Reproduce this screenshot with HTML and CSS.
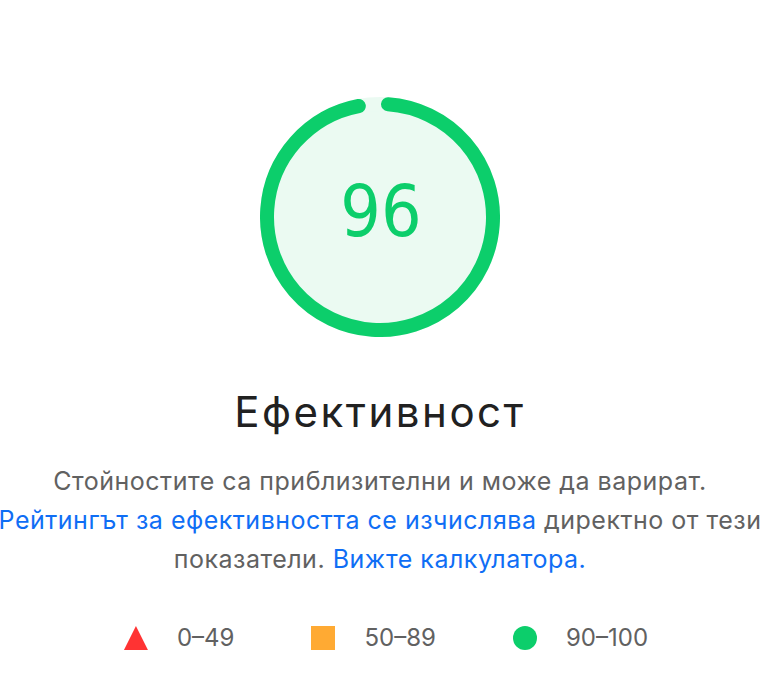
FILE: index.html
```html
<!DOCTYPE html>
<html lang="bg">
<head>
    <meta charset="UTF-8">
    <meta name="viewport" content="width=device-width, initial-scale=1.0">
    <title>Ефективност</title>
    <link rel="stylesheet" href="styles.css">
</head>
<body>

    <div class="report">
        <svg class="gauge" viewBox="0 0 240 240" width="240" height="240">
            <circle class="gauge-base" cx="120" cy="120" r="113"></circle>
            <circle class="gauge-arc" cx="120" cy="120" r="113" transform="rotate(-85.94 120 120)"></circle>
            <text class="gauge-value" x="121" y="139">96</text>
        </svg>

        <h2 class="gauge-title">Ефективност</h2>

        <p class="gauge-desc">
            Стойностите са приблизителни и може да варират.<br>
            <a href="#">Рейтингът за ефективността се изчислява</a> директно от тези<br>
            показатели. <a href="#">Вижте калкулатора.</a>
        </p>

        <div class="scale">
            <span class="scale-item"><span class="mark mark-fail"></span>0–49</span>
            <span class="scale-item"><span class="mark mark-average"></span>50–89</span>
            <span class="scale-item"><span class="mark mark-pass"></span>90–100</span>
        </div>
    </div>

</body>
</html>
```

FILE: styles.css
```css
html, body { margin: 0; background: #fff; overflow: hidden; }
body { font-family: Inter, "Noto Sans", sans-serif; color: #616161; }

.report { width: 760px; padding-top: 97px; display: flex; flex-direction: column; align-items: center; }

.gauge { display: block; }
.gauge-base { fill: #0cce6b; stroke: #0cce6b; stroke-width: 14; opacity: 0.08; }
.gauge-arc { fill: none; stroke: #0cce6b; stroke-width: 14; stroke-linecap: round; stroke-dasharray: 680 710; }
.gauge-value { font-family: "DejaVu Sans", sans-serif; font-stretch: condensed; font-size: 71px; fill: #0cce6b; text-anchor: middle; }

.gauge-title { margin: 51px 0 0; font-size: 42px; line-height: 48px; letter-spacing: 2.5px; font-weight: normal; color: #212121; }

.gauge-desc { margin: 26px 0 0; font-size: 25px; line-height: 39px; letter-spacing: 0.5px; text-align: center; white-space: nowrap; }
.gauge-desc a { color: #0f6ef5; text-decoration: none; }

.scale { margin: 47px 0 0 12px; display: flex; gap: 77px; font-size: 24px; line-height: 24px; color: #616161; }
.scale-item { display: flex; align-items: center; }
.mark { width: 24px; height: 24px; margin-right: 29px; display: inline-block; }
.mark-fail { background: #ff3333; clip-path: polygon(50% 0, 100% 100%, 0 100%); }
.mark-average { background: #ffaa33; }
.mark-pass { background: #0cce6b; border-radius: 50%; }
```
